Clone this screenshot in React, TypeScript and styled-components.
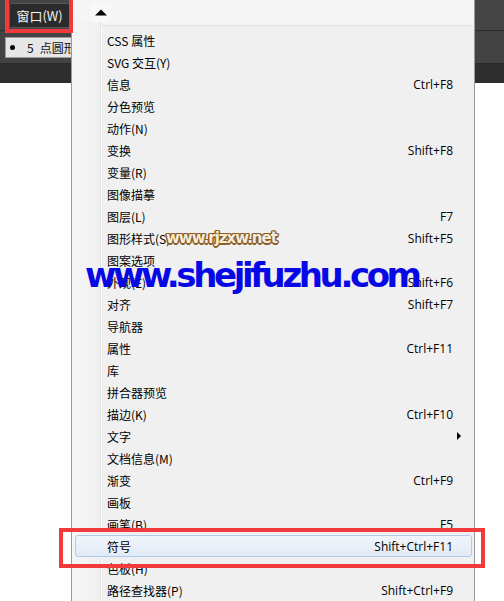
import React from "react";
import styled, { createGlobalStyle } from "styled-components";

const Global = createGlobalStyle`
  html, body { margin: 0; padding: 0; }
  body { width: 504px; height: 601px; overflow: hidden; background: #fff; }
  * { box-sizing: border-box; }
`;

const Page = styled.div`
  position: relative;
  width: 504px;
  height: 601px;
  overflow: hidden;
  background: #ffffff;
  font-family: "Noto Sans CJK SC", "Noto Sans", sans-serif;
`;

const TopBar = styled.div`
  display: flex;
  flex-direction: column;
`;

const MenuStrip = styled.div`
  height: 31px;
  background: #454545;
  border-bottom: 1px solid #2c2c2c;
  display: flex;
  align-items: flex-start;
  padding: 3px 0 0 9px;
`;

const MenuButton = styled.div`
  width: 61px;
  height: 25px;
  background: #2b2b2b;
  border: 1px solid #555555;
  border-radius: 2px;
  color: #f2f2f2;
  font-size: 13px;
  display: flex;
  align-items: center;
  justify-content: center;
  line-height: 1;
`;

const ControlStrip = styled.div`
  height: 33px;
  background: #434343;
  border-bottom: 1px solid #2a2a2a;
  display: flex;
  align-items: center;
  padding-left: 5px;
`;

const Chip = styled.div`
  width: 90px;
  height: 21px;
  background: #e6e6e6;
  border: 1px solid #9c9c9c;
  display: flex;
  align-items: center;
  padding-left: 4px;
  font-size: 12px;
  color: #111;
`;

const Dot = styled.span`
  width: 5px;
  height: 5px;
  border-radius: 50%;
  background: #000;
  margin-right: 12px;
`;

const ChipNum = styled.span`
  margin-right: 6px;
`;

const ShadowStrip = styled.div`
  height: 19px;
  background: #2e2e2e;
`;

const Menu = styled.div`
  position: absolute;
  left: 71px;
  top: 0;
  width: 404px;
  height: 610px;
  background: #f0f0f0;
  border-left: 1px solid #9a9a9a;
  border-right: 1px solid #9a9a9a;
  display: flex;
  flex-direction: column;
`;

const MenuHeader = styled.div`
  height: 22px;
  background: #f5f5f5;
  padding: 3px 0 0 19px;
  display: flex;
`;

const ArrowBox = styled.div`
  width: 19px;
  height: 19px;
  background: #f8f8f8;
  display: flex;
  align-items: center;
  justify-content: center;
`;

const MenuBody = styled.div`
  flex: 1;
  background: linear-gradient(
    to right,
    #f5f5f5 0,
    #f0f0f0 28px,
    #e2e3e3 28px,
    #e2e3e3 29px,
    #ffffff 29px,
    #ffffff 30px,
    #f0f0f0 30px
  );
  display: flex;
  flex-direction: column;
`;

const HeaderRule = styled.div`
  height: 4px;
  margin-left: 29px;
  margin-right: 2px;
  background: #f5f5f5;
  border-bottom: 1px solid #e2e2e2;
`;

const ItemList = styled.div`
  padding-top: 3px;
  display: flex;
  flex-direction: column;
`;

const Item = styled.div<{ $active?: boolean }>`
  height: 22px;
  margin: 0 2px 0 3px;
  padding-left: 31px;
  display: flex;
  align-items: center;
  font-size: 12px;
  color: #000;
  border-radius: 3px;
  border: 1px solid ${(p) => (p.$active ? "#aecbef" : "transparent")};
  background: ${(p) =>
    p.$active ? "linear-gradient(#f1f5fb, #e1eaf6)" : "transparent"};
`;

const Label = styled.span`
  flex: 1;
  white-space: nowrap;
`;

const Shortcut = styled.span`
  white-space: nowrap;
  font-family: "Open Sans", "Noto Sans", sans-serif;
  font-size: 12px;
`;

const ArrowCell = styled.span`
  width: 18px;
  display: flex;
  align-items: center;
  padding-left: 4px;
`;

const SubArrow = styled.span`
  width: 0;
  height: 0;
  border-top: 4px solid transparent;
  border-bottom: 4px solid transparent;
  border-left: 4px solid #000;
`;

const RedBox = styled.div<{ $x: number; $y: number; $w: number; $h: number }>`
  position: absolute;
  left: ${(p) => p.$x}px;
  top: ${(p) => p.$y}px;
  width: ${(p) => p.$w}px;
  height: ${(p) => p.$h}px;
  border: 4px solid #f03a3c;
  pointer-events: none;
`;

const BrownMark = styled.div`
  position: absolute;
  left: 166px;
  top: 231px;
  font-family: "DejaVu Sans", sans-serif;
  font-weight: bold;
  font-size: 15px;
  line-height: 15px;
  letter-spacing: -1px;
  color: #f6ecd9;
  text-shadow: 1.5px 0 0 #8b5f2c, -1.5px 0 0 #8b5f2c, 0 1.5px 0 #8b5f2c,
    0 -1.5px 0 #8b5f2c, 1px 1px 0 #8b5f2c, -1px -1px 0 #8b5f2c,
    1px -1px 0 #8b5f2c, -1px 1px 0 #8b5f2c;
  white-space: nowrap;
`;

const BlueMark = styled.div`
  position: absolute;
  left: 85px;
  top: 258px;
  font-family: "DejaVu Sans", sans-serif;
  font-weight: bold;
  font-size: 34px;
  line-height: 34px;
  letter-spacing: -3.4px;
  color: #0808e6;
  white-space: nowrap;
`;

type Entry = { label: string; key?: string; sub?: boolean; active?: boolean };

const items: Entry[] = [
  { label: "CSS 属性" },
  { label: "SVG 交互(Y)" },
  { label: "信息", key: "Ctrl+F8" },
  { label: "分色预览" },
  { label: "动作(N)" },
  { label: "变换", key: "Shift+F8" },
  { label: "变量(R)" },
  { label: "图像描摹" },
  { label: "图层(L)", key: "F7" },
  { label: "图形样式(S)", key: "Shift+F5" },
  { label: "图案选项" },
  { label: "外观(E)", key: "Shift+F6" },
  { label: "对齐", key: "Shift+F7" },
  { label: "导航器" },
  { label: "属性", key: "Ctrl+F11" },
  { label: "库" },
  { label: "拼合器预览" },
  { label: "描边(K)", key: "Ctrl+F10" },
  { label: "文字", sub: true },
  { label: "文档信息(M)" },
  { label: "渐变", key: "Ctrl+F9" },
  { label: "画板" },
  { label: "画笔(B)", key: "F5" },
  { label: "符号", key: "Shift+Ctrl+F11", active: true },
  { label: "色板(H)" },
  { label: "路径查找器(P)", key: "Shift+Ctrl+F9" },
];

export default function App() {
  return (
    <Page>
      <Global />
      <TopBar>
        <MenuStrip>
          <MenuButton>窗口(W)</MenuButton>
        </MenuStrip>
        <ControlStrip>
          <Chip>
            <Dot />
            <ChipNum>5</ChipNum>
            <span>点圆形</span>
          </Chip>
        </ControlStrip>
        <ShadowStrip />
      </TopBar>

      <Menu>
        <MenuHeader>
          <ArrowBox>
            <svg width="12" height="7" viewBox="0 0 12 7">
              <polygon points="0,6.5 6,0.5 12,6.5" fill="#000" />
            </svg>
          </ArrowBox>
        </MenuHeader>
        <MenuBody>
          <HeaderRule />
          <ItemList>
            {items.map((it) => (
              <Item key={it.label} $active={it.active}>
                <Label>{it.label}</Label>
                {it.key && <Shortcut>{it.key}</Shortcut>}
                <ArrowCell>{it.sub && <SubArrow />}</ArrowCell>
              </Item>
            ))}
          </ItemList>
        </MenuBody>
      </Menu>

      <RedBox $x={5} $y={-4} $w={68} $h={37} />
      <RedBox $x={59} $y={528} $w={426} $h={40} />

      <BrownMark>www.rjzxw.net</BrownMark>
      <BlueMark>www.shejifuzhu.com</BlueMark>
    </Page>
  );
}
